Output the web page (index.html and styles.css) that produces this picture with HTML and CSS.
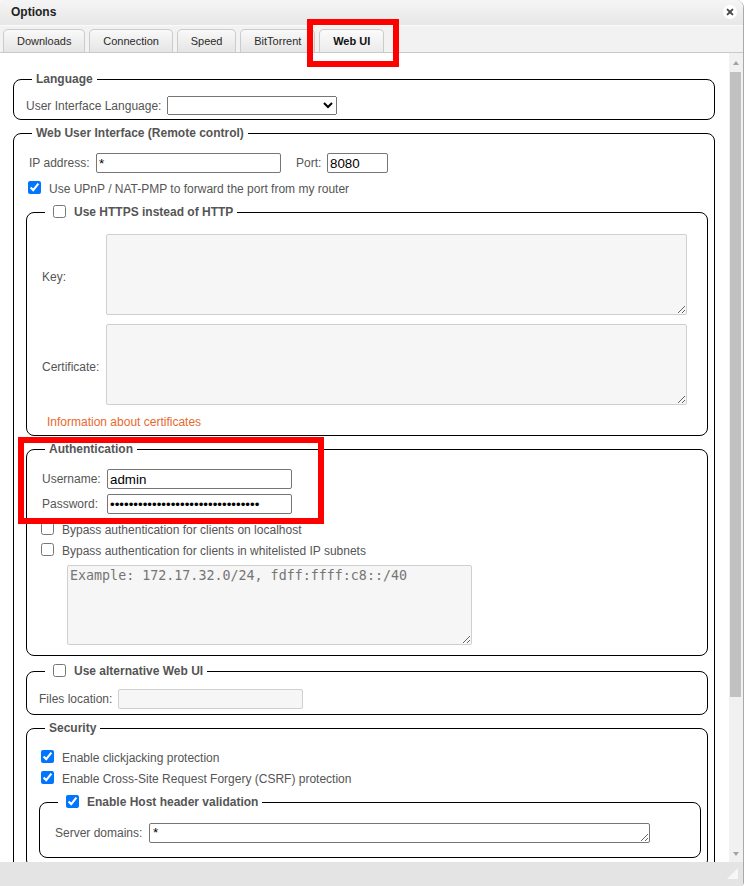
FILE: index.html
```html
<!DOCTYPE html>
<html lang="en">

<head>
    <meta charset="UTF-8">
    <meta name="viewport" content="width=device-width, initial-scale=1.0">
    <title>Options</title>
    <link rel="stylesheet" href="styles.css">
</head>

<body>
    <div class="window">
        <div class="titlebar">
            <span class="title">Options</span>
            <span class="close">
                <svg width="14" height="14" viewBox="0 0 14 14">
                    <circle cx="7" cy="7" r="7" fill="#fff" />
                    <path d="M4.6 4.6 L9.4 9.4 M9.4 4.6 L4.6 9.4" stroke="#4a4a4a" stroke-width="2" stroke-linecap="round" />
                </svg>
            </span>
        </div>

        <div class="tabs">
            <span class="tab">Downloads</span>
            <span class="tab">Connection</span>
            <span class="tab">Speed</span>
            <span class="tab">BitTorrent</span>
            <span class="tab active">Web UI</span>
        </div>

        <div class="main">
            <div class="content">

                <fieldset class="settings">
                    <legend>Language</legend>
                    <div class="row">
                        <label class="lang-label">User Interface Language:</label>
                        <select class="lang"></select>
                    </div>
                </fieldset>

                <fieldset class="settings webui">
                    <legend>Web User Interface (Remote control)</legend>
                    <div class="row ip-row">
                        <label class="ip-label">IP address:</label>
                        <input type="text" class="field" value="*">
                        <label class="port-label">Port:</label>
                        <input type="text" class="field port" value="8080">
                    </div>
                    <label class="check upnp"><input type="checkbox" checked><span>Use UPnP / NAT-PMP to forward the port from my router</span></label>

                    <fieldset class="settings https">
                        <legend><label class="legend-check"><input type="checkbox"><span>Use HTTPS instead of HTTP</span></label></legend>
                        <div class="cert-grid">
                            <label>Key:</label>
                            <textarea disabled></textarea>
                            <label>Certificate:</label>
                            <textarea disabled></textarea>
                        </div>
                        <a class="info-link" href="#">Information about certificates</a>
                    </fieldset>

                    <fieldset class="settings auth">
                        <legend>Authentication</legend>
                        <div class="auth-grid">
                            <label>Username:</label>
                            <input type="text" class="field" value="admin">
                            <label>Password:</label>
                            <input type="password" class="field" value="12345678901234567890123456789012">
                        </div>
                        <label class="check bypass"><input type="checkbox"><span>Bypass authentication for clients on localhost</span></label>
                        <label class="check"><input type="checkbox"><span>Bypass authentication for clients in whitelisted IP subnets</span></label>
                        <textarea class="subnets" disabled placeholder="Example: 172.17.32.0/24, fdff:ffff:c8::/40"></textarea>
                    </fieldset>

                    <fieldset class="settings alt">
                        <legend><label class="legend-check"><input type="checkbox"><span>Use alternative Web UI</span></label></legend>
                        <div class="row files-row">
                            <label class="files-label">Files location:</label>
                            <input type="text" class="field" disabled>
                        </div>
                    </fieldset>

                    <fieldset class="settings security">
                        <legend>Security</legend>
                        <label class="check first"><input type="checkbox" checked><span>Enable clickjacking protection</span></label>
                        <label class="check"><input type="checkbox" checked><span>Enable Cross-Site Request Forgery (CSRF) protection</span></label>

                        <fieldset class="settings host">
                            <legend><label class="legend-check"><input type="checkbox" checked><span>Enable Host header validation</span></label></legend>
                            <div class="row domains-row">
                                <label class="domains-label">Server domains:</label>
                                <textarea class="domains">*</textarea>
                            </div>
                        </fieldset>
                    </fieldset>
                </fieldset>

            </div>

            <div class="scrollbar">
                <div class="scroll-btn up"></div>
                <div class="thumb"></div>
                <div class="track"></div>
                <div class="scroll-btn down"></div>
            </div>
        </div>

        <div class="statusbar">
            <svg width="11" height="11" viewBox="0 0 11 11">
                <polygon points="11,0 11,11 0,11" fill="#f7f7f7" />
            </svg>
        </div>
    </div>

    <!-- red annotation boxes -->
    <div class="mark mark-tab"></div>
    <div class="mark mark-auth"></div>
</body>

</html>
```

FILE: styles.css
```css
* {
    box-sizing: border-box;
}

body {
    position: relative;
    margin: 0;
    padding: 0;
    background: #fff;
    font-family: "Liberation Sans", Arial, sans-serif;
    font-size: 12px;
    line-height: 14px;
    color: #555;
}

.window {
    display: flex;
    flex-direction: column;
    width: 744px;
    height: 886px;
    border-right: 1px solid #a9a9a9;
    border-radius: 2px 8px 4px 0;
    overflow: hidden;
    background: #fff;
}

/* title + tabs */
.titlebar {
    flex: none;
    display: flex;
    align-items: center;
    justify-content: space-between;
    height: 26px;
    padding: 0 6px 1px 11px;
    background: linear-gradient(#f5f5f5, #e7e7e7);
    border-bottom: 1px solid #fafafa;
}

.title {
    font-weight: bold;
    color: #222;
}

.close {
    display: flex;
}

.tabs {
    flex: none;
    display: flex;
    align-items: flex-end;
    gap: 3.8px;
    height: 27px;
    padding-left: 3px;
    background: #f2f2f2;
    border-bottom: 1px solid #c9c9c9;
}

.tab {
    height: 23px;
    padding: 0 13px;
    border: 1px solid #cbcbcb;
    border-bottom: none;
    border-radius: 5px 5px 0 0;
    background: linear-gradient(#f9f9f9, #e5e5e5);
    font-size: 11px;
    line-height: 22px;
    color: #2a2a2a;
}

.tab.active {
    font-weight: bold;
    color: #111;
    background: linear-gradient(#fbfbfb, #ebebeb);
}

/* scrolling area */
.main {
    flex: 1;
    display: flex;
    min-height: 0;
}

.content {
    flex: 1;
    overflow: hidden;
    padding: 19px 14px 0 13px;
}

.scrollbar {
    flex: none;
    display: flex;
    flex-direction: column;
    width: 14px;
    background: #f1f1f1;
}

.scroll-btn {
    display: flex;
    align-items: center;
    justify-content: center;
    height: 17px;
}

.scroll-btn.up {
    padding-top: 2px;
}

.scroll-btn.up::before,
.scroll-btn.down::before {
    content: "";
    border-left: 3.5px solid transparent;
    border-right: 3.5px solid transparent;
}

.scroll-btn.up::before {
    border-bottom: 4px solid #a3a3a3;
}

.scroll-btn.down::before {
    border-top: 4px solid #a3a3a3;
}

.thumb {
    height: 625px;
    margin: 2px 2px 0 1px;
    background: #c1c1c1;
}

.track {
    flex: 1;
}

.statusbar {
    flex: none;
    display: flex;
    justify-content: flex-end;
    align-items: flex-end;
    height: 24px;
    padding: 0 5px 7px 0;
    background: #e4e4e4;
}

/* fieldsets */
.settings {
    min-width: 0;
    margin: 0 0 6px;
    padding: 10px 6px 4px 12px;
    border: 1px solid #000;
    border-radius: 8px;
}

legend {
    margin-left: 6px;
    padding: 0 4px;
    font-weight: bold;
    line-height: 14px;
}

.legend-check {
    display: inline-flex;
    align-items: center;
    gap: 8px;
    height: 14px;
    vertical-align: top;
}

.legend-check input {
    margin: 0 0 2px 4px;
}

input[type="checkbox"] {
    width: 13px;
    height: 13px;
    flex: none;
}

.row {
    display: flex;
    align-items: center;
}

.check {
    display: flex;
    align-items: center;
    gap: 8px;
    height: 21px;
}

.check input {
    margin: 0 0 3px 2px;
}

.field {
    height: 20px;
    width: 185px;
    padding: 1px 2px;
    border: 1px solid #767676;
    border-radius: 2px;
    font-family: "Liberation Sans", Arial, sans-serif;
    font-size: 13.33px;
    color: #000;
}

.field:disabled {
    background: #f6f6f6;
    border-color: #cfcfcf;
}

textarea {
    display: block;
    padding: 2px;
    border: 1px solid #767676;
    border-radius: 2px;
    font-family: "DejaVu Sans Mono", monospace;
    font-size: 13.33px;
}

textarea:disabled {
    background: #f6f6f6;
    border-color: #cfcfcf;
}

textarea::placeholder {
    color: #757575;
}

/* language */
.lang-label {
    width: 141px;
}

.lang {
    width: 170px;
    height: 19px;
}

/* web ui */
.ip-row {
    margin: 3px 0 0 3px;
}

.ip-label {
    width: 67px;
}

.port-label {
    width: 31px;
    margin-left: 15px;
}

.field.port {
    width: 61px;
}

.upnp {
    margin-top: 5px;
}

.https {
    margin-top: 6px;
}

.cert-grid {
    display: grid;
    grid-template-columns: 64px 581px;
    row-gap: 9px;
    align-items: center;
    margin: 5px 0 0 3px;
}

.cert-grid label {
    padding-top: 4px;
}

.cert-grid textarea {
    height: 81px;
}

.info-link {
    display: block;
    margin: 10px 0 0 8px;
    padding-bottom: 2px;
    color: #e8692e;
    text-decoration: none;
}

/* authentication */
.auth {
    padding-bottom: 10px;
}

.auth-grid {
    display: grid;
    grid-template-columns: 65px 185px;
    row-gap: 5px;
    align-items: center;
    margin: 3px 0 0 3px;
}

.bypass {
    margin-top: 5px;
}

.subnets {
    width: 405px;
    height: 80px;
    margin: 4px 0 0 28px;
}

/* alternative web ui */
.alt {
    margin-top: 8px;
    padding-bottom: 5px;
}

.files-row {
    margin-top: 1px;
}

.files-label {
    width: 79px;
}

/* security */
.security {
    padding-bottom: 3px;
}

.security .first {
    margin-top: 2px;
}

.host {
    margin-top: 6px;
    padding-bottom: 11px;
}

.domains-row {
    margin: 4px 0 3px 3px;
}

.domains-label {
    width: 94px;
}

.domains {
    width: 501px;
    height: 20px;
    padding: 1px 3px;
    font-family: "Liberation Sans", Arial, sans-serif;
    color: #000;
}

/* annotation marks */
.mark {
    position: absolute;
    border: 6px solid #ff0000;
}

.mark-tab {
    left: 307px;
    top: 19px;
    width: 92px;
    height: 48px;
}

.mark-auth {
    left: 18px;
    top: 437px;
    width: 306px;
    height: 87px;
}
```
